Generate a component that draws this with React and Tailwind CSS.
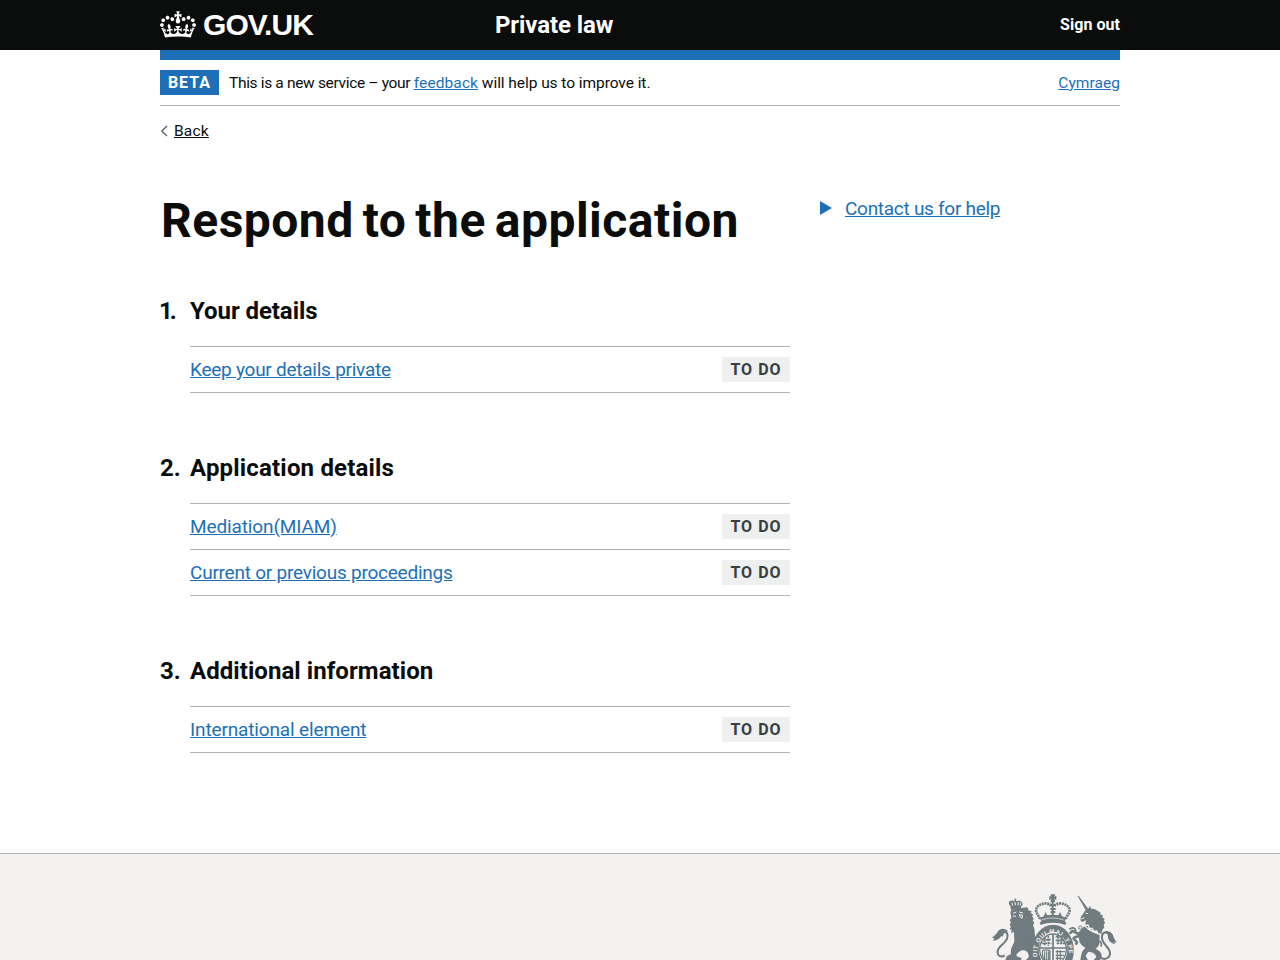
const sections = [
  {
    title: 'Your details',
    spacing: 'tracking-[-0.07px]',
    tasks: [{ label: 'Keep your details private', spacing: 'tracking-[-0.25px]' }],
  },
  {
    title: 'Application details',
    spacing: 'tracking-[0.18px]',
    tasks: [
      { label: 'Mediation(MIAM)', spacing: 'tracking-[-0.12px]' },
      { label: 'Current or previous proceedings', spacing: 'tracking-[-0.23px]' },
    ],
  },
  {
    title: 'Additional information',
    spacing: 'tracking-[0.06px]',
    tasks: [{ label: 'International element', spacing: 'tracking-[-0.14px]' }],
  },
];

function Crown() {
  return (
    <svg viewBox="0 0 132 97" className="h-[27px] w-9 fill-white" aria-hidden="true">
      <path
        fillRule="evenodd"
        d="M25 30.2c3.5 1.5 7.7-.2 9.1-3.7 1.5-3.6-.2-7.8-3.9-9.2-3.6-1.4-7.6.3-9.1 3.9-1.4 3.5.3 7.5 3.9 9zM9 39.5c3.6 1.5 7.8-.2 9.2-3.7 1.5-3.6-.2-7.8-3.9-9.1-3.6-1.5-7.6.2-9.1 3.8-1.4 3.5.3 7.5 3.8 9zM4.4 57.2c3.5 1.5 7.7-.2 9.1-3.8 1.5-3.6-.2-7.7-3.9-9.1-3.5-1.5-7.6.3-9.1 3.8-1.4 3.5.3 7.6 3.9 9.1zm38.3-21.4c3.5 1.5 7.7-.2 9.1-3.8 1.5-3.6-.2-7.7-3.9-9.1-3.6-1.5-7.6.3-9.1 3.8-1.3 3.6.4 7.7 3.9 9.1zm64.4-5.6c-3.6 1.5-7.8-.2-9.1-3.7-1.5-3.6.2-7.8 3.8-9.2 3.6-1.4 7.7.3 9.2 3.9 1.3 3.5-.4 7.5-3.9 9zm15.9 9.3c-3.6 1.5-7.7-.2-9.1-3.7-1.5-3.6.2-7.8 3.7-9.1 3.6-1.5 7.7.2 9.2 3.8 1.5 3.5-.3 7.5-3.8 9zm4.7 17.7c-3.6 1.5-7.8-.2-9.2-3.8-1.5-3.6.2-7.7 3.9-9.1 3.6-1.5 7.7.3 9.2 3.8 1.3 3.5-.4 7.6-3.9 9.1zM89.3 35.8c-3.6 1.5-7.8-.2-9.2-3.8-1.4-3.6.2-7.7 3.9-9.1 3.6-1.5 7.7.3 9.2 3.8 1.4 3.6-.3 7.7-3.9 9.1zM69.7 17.7l8.9 4.7V9.3l-8.9 2.8c-.2-.3-.5-.6-.9-.9L72.4 0H59.6l3.5 11.2c-.3.3-.6.5-.9.9l-8.8-2.8v13.1l8.8-4.7c.3.3.6.7.9.9l-5 15.4v.1c-.2.8-.4 1.6-.4 2.4 0 4.1 3.1 7.5 7 8.1h.2c.3 0 .7.1 1 .1.4 0 .7 0 1-.1h.2c4-.6 7.1-4.1 7.1-8.1 0-.8-.1-1.7-.4-2.4V34l-5.1-15.4c.4-.2.7-.6 1-.9zM66 92.8c16.9 0 32.8 1.1 47.1 3.2 4-16.9 8.9-26.7 14-33.5l-9.6-3.4c1 4.9 1.1 7.2 0 10.2-1.5-1.4-3-4.3-4.2-8.7L108.6 76c2.8-2 5-3.2 7.5-3.3-4.4 9.4-10 11.9-13.6 11.2-4.3-.8-6.3-4.6-5.6-7.9 1-4.7 5.7-5.9 8-.5 4.3-8.7-3-11.4-7.6-8.8 7.1-7.2 7.9-13.5 2.1-21.1-8 6.1-8.1 12.3-4.5 20.8-4.7-5.4-12.1-2.5-9.5 6.2 3.4-5.2 7.9-2 7.2 3.1-.6 4.3-6.4 7.8-13.5 7.2-10.3-.9-10.9-8-11.2-13.8 2.5-.5 7.1 1.8 11 7.3L80.2 60c-4.1 4.4-8 5.3-12.3 5.4 1.4-4.4 8-11.6 8-11.6H55.5s6.4 7.2 7.9 11.6c-4.2-.1-8-1-12.3-5.4l1.4 16.4c3.9-5.5 8.5-7.7 10.9-7.3-.3 5.8-.9 12.8-11.1 13.8-7.2.6-12.9-2.9-13.5-7.2-.7-5 3.8-8.3 7.1-3.1 2.7-8.7-4.6-11.6-9.4-6.2 3.7-8.5 3.6-14.7-4.6-20.8-5.8 7.6-5 13.9 2.2 21.1-4.7-2.6-11.9.1-7.7 8.8 2.3-5.5 7.1-4.2 8.1.5.7 3.3-1.3 7.1-5.7 7.9-3.5.7-9-1.8-13.5-11.2 2.5.1 4.7 1.3 7.5 3.3l-4.7-15.4c-1.2 4.4-2.7 7.2-4.3 8.7-1.1-3-.9-5.3 0-10.2l-9.5 3.4c5 6.9 9.9 16.7 14 33.5 14.8-2.1 30.8-3.2 47.7-3.2z"
      />
    </svg>
  );
}

function RoyalArms() {
  return (
    <svg viewBox="30 27 390 198" className="h-[66px] w-[130px]" fill="#6f7b7e" stroke="none" aria-hidden="true">
      {/* lion: crown, mane and body, tail */}
      <path d="M91 62c-6-4-7-13 2-15 3-1 7 0 9 2l2-2-1-6 6 0-1 6 2 2c4-3 11-2 15 2 5 5 3 11-2 14l-1 9c-10-3-19-2-29 3z" />
      <path d="M96 53l2 9m7-11l1 10m9-10l-1 10m9-8l-3 8" fill="none" stroke="#f3f2f1" strokeWidth="3" />
      <path d="M91 80c8-7 20-11 34-11l14-2 6 3-1 5 11 4-3 4 8 6-4 5 6 8-4 3 5 10-4 5 4 11 2 22 5 10v17l-4 24v21h-28l9-10-3-10c-4-9-12-11-22-8-8 6-14 8-12 17l14 5v6H76l5-12 12-6c-3-18 8-27 10-38l-1-28-9 3 2-9-6-3 4-7-4-6 4-7-4-6 5-7z" />
      <path d="M99 85l10-4m8 0l12 3M118 89l10 2-2 9-5-3zM98 93l10 1" fill="none" stroke="#f3f2f1" strokeWidth="3" />
      <path d="M144 154l14 14 18 17-4 6-22-9-12-15z" />
      <path d="M74 211c-12 8-23 0-21-13 2-16 26-23 29-40 2-11-3-19-11-21" fill="none" stroke="#6f7b7e" strokeWidth="6" />
      <path d="M84 138c-14-11-26-7-32 4-5 9-10 9-16 18l7 0-4 8c12-2 22-7 25-15l5 2c-1-7 5-12 15-17z" />
      {/* central crown */}
      <path d="M211 28h15l-3 7 6-3v13l-6-3 3 9h-15l3-9-6 3V32l6 3z" />
      <path d="M218 49v41M209 61h19M211 72l16 0M212 81h14" stroke="#6f7b7e" strokeWidth="6" fill="none" />
      <path d="M214 62c-11-12-39-7-45 9-4 11 8 21 12 33m42-42c11-12 39-7 45 9 4 11-8 21-12 33" fill="none" stroke="#6f7b7e" strokeWidth="8" strokeDasharray="6 2" />
      <path d="M190 96l7-15 7 15m29 0l7-15 7 15M180 99c23-13 55-13 78 0l-5 13c-23-10-45-10-68 0z" />
      <path d="M185 105c22-8 44-8 66 0" fill="none" stroke="#f3f2f1" strokeWidth="2" />
      <path d="M179 112c26-12 54-12 80 0l-3 8c-24-9-49-9-74 0z" />
      {/* garter and shield */}
      <ellipse cx="219" cy="196" rx="52" ry="66" fill="none" stroke="#6f7b7e" strokeWidth="21" />
      <path id="garter" d="M172 216A48 59 0 1 1 266 216" fill="none" />
      <text fontFamily="Liberation Sans, sans-serif" fontWeight="700" fontSize="18" fill="#f3f2f1">
        <textPath href="#garter" textLength="182">OIT QUI MAL Y PE</textPath>
      </text>
      <ellipse cx="219" cy="193" rx="43" ry="49" fill="#f3f2f1" />
      <ellipse cx="219" cy="193" rx="40" ry="46" fill="none" stroke="#6f7b7e" strokeWidth="4" />
      <path d="M187 164h25m-27 11h29m-20-20v28m11-30v30m22-28h22m-22 11h27m-24 9h26m-22-30v30m10-24v24" stroke="#6f7b7e" strokeWidth="5" fill="none" strokeDasharray="7 2" />
      <path d="M178 189h82M219 147v78" stroke="#6f7b7e" strokeWidth="5" />
      <path d="M188 196c8-2 15-2 22 0v29h-16c-8-9-8-18-6-29zM194 199v26m6-26v26m6-26v26M227 200h28m-28 11h25m-25 9h20m-15-25v30m9-30v30" fill="none" stroke="#6f7b7e" strokeWidth="3.5" />
      {/* unicorn: horn, head and body, tail */}
      <path d="M293 34l3-1 29 39-8 3z" />
      <path d="M316 76l9-5 5-8 3 8c11-1 17 5 24 9l5 3-1 6 9 2-4 5 8 6-3 5 5 6-5 5 2 9-6 8-3 12-17-7-23-11-10-9 5-15-12 6-6-5 2-11 8-11z" />
      <path d="M317 85l7 1M304 102l9-4" stroke="#f3f2f1" strokeWidth="3" />
      <path d="M312 112l4 9 8-1 4 10 9 0 4 9 9-1 5 10" fill="none" stroke="#f3f2f1" strokeWidth="4" />
      <path d="M313 124l12 11 16 8 18 7-1 18c2 10-2 17-11 23 12 6 19 13 18 22l-5 13h-20l9-10c-3-11-12-15-24-16l-8 12 7 14h-23c3-16 3-29 16-37-12-6-19-14-20-27l-4-17z" />
      <path d="M302 147c-10 2-15-7-25-9l-8 8m31 4c-5 6-15 4-19 10l10 12-4 7" fill="none" stroke="#6f7b7e" strokeWidth="8" />
      <circle cx="301" cy="128" r="5" fill="#f3f2f1" stroke="#6f7b7e" strokeWidth="3" />
      <path d="M268 133c9-8 17-5 20 5M357 168c7 2 9 9 6 17" fill="none" stroke="#6f7b7e" strokeWidth="5" />
      <path d="M361 218c15 9 30 0 29-14-1-19-23-25-24-45-1-12 6-20 18-18" fill="none" stroke="#6f7b7e" strokeWidth="6" />
      <path d="M370 144c13-9 25-3 29 7 3 8 5 15 12 21l-8 0 2 6c-13-4-21-11-21-24 0-7-6-10-14-10z" />
    </svg>
  );
}

function Header() {
  return (
    <header className="h-[50px] bg-[#0b0c0c] text-white">
      <div className="mx-auto flex h-full w-[960px] items-center">
        <div className="flex w-[335px] items-center gap-[7px] pb-0.5">
          <Crown />
          <span className="pt-0.5 font-['Liberation_Sans'] text-[30px] leading-none font-bold tracking-[-0.95px]">GOV.UK</span>
        </div>
        <a className="flex-1 text-2xl leading-none font-bold tracking-[-0.1px]">Private law</a>
        <a className="text-base leading-none font-bold tracking-[0.05px]">Sign out</a>
      </div>
    </header>
  );
}

function PhaseBanner() {
  return (
    <div className="flex h-[46px] items-center border-b border-[#b1b4b6]">
      <strong className="flex h-[25px] w-[59px] items-center justify-center bg-[#1d70b8] text-base font-bold tracking-[1px] text-white">
        BETA
      </strong>
      <p className="flex-1 pl-2.5 text-[15.5px] leading-5">
        <span className="tracking-[-0.33px]">This is a new service – your </span>
        <a className="tracking-[0.1px] text-[#1d70b8] underline underline-offset-1">feedback</a>
        <span className="tracking-[-0.06px]"> will help us to improve it.</span>
      </p>
      <a className="text-[15.5px] leading-5 tracking-[0.05px] text-[#1d70b8] underline underline-offset-1">Cymraeg</a>
    </div>
  );
}

function Section({ number, title, spacing, tasks }) {
  return (
    <li className="flex flex-col">
      <h2 className="flex h-[30px] items-center text-2xl font-bold">
        <span className={number === 1 ? '-ml-px w-[31px] tracking-[-3px]' : 'w-[30px]'}>{number}.</span>
        <span className={spacing}>{title}</span>
      </h2>
      <ul className="mt-5 ml-[30px] border-t border-[#b1b4b6]">
        {tasks.map((task) => (
          <li key={task.label} className="flex h-[46px] items-center justify-between border-b border-[#b1b4b6]">
            <a className={`text-[19px] leading-[25px] text-[#1d70b8] underline underline-offset-1 ${task.spacing}`}>
              {task.label}
            </a>
            <strong className="flex h-[25px] w-[68px] items-center justify-center bg-[#eeefef] text-base font-bold tracking-[1px] text-[#383f43]">
              TO DO
            </strong>
          </li>
        ))}
      </ul>
    </li>
  );
}

export default function App() {
  return (
    <div className="flex h-[960px] flex-col overflow-hidden bg-white font-[Roboto,sans-serif] text-[#0b0c0c]">
      <Header />
      <div className="mx-auto w-[960px] flex-1">
        <div className="h-2.5 bg-[#1d70b8]" />
        <PhaseBanner />
        <a className="mt-[15px] flex h-5 items-center gap-1.5 text-[15.5px] leading-5">
          <svg viewBox="0 0 8 12" className="h-3 w-2" fill="none" stroke="#505a5f" strokeWidth="1.2" aria-hidden="true">
            <path d="M7 1L1.7 6 7 11" />
          </svg>
          <span className="tracking-[0.2px] underline underline-offset-1">Back</span>
        </a>
        <main className="flex gap-[30px] pt-[55px]">
          <div className="w-[630px]">
            <h1 className="pl-px text-5xl leading-[50px] font-bold tracking-[0.49px] [word-spacing:-3.5px]">
              Respond to the application
            </h1>
            <ol className="mt-[50px] flex flex-col gap-[60px]">
              {sections.map((section, i) => (
                <Section key={section.title} number={i + 1} {...section} />
              ))}
            </ol>
          </div>
          <aside className="flex h-[25px] items-center gap-[13px]">
            <svg viewBox="0 0 12 14" className="mb-0.5 h-3.5 w-3 fill-[#1d70b8]" aria-hidden="true">
              <path d="M0 0l12 7L0 14z" />
            </svg>
            <a className="text-[19px] leading-[25px] tracking-[-0.28px] text-[#1d70b8] underline underline-offset-1">
              Contact us for help
            </a>
          </aside>
        </main>
      </div>
      <footer className="h-[107px] border-t border-[#b1b4b6] bg-[#f3f2f1]">
        <div className="mx-auto flex w-[960px] justify-end pt-10">
          <RoyalArms />
        </div>
      </footer>
    </div>
  );
}
